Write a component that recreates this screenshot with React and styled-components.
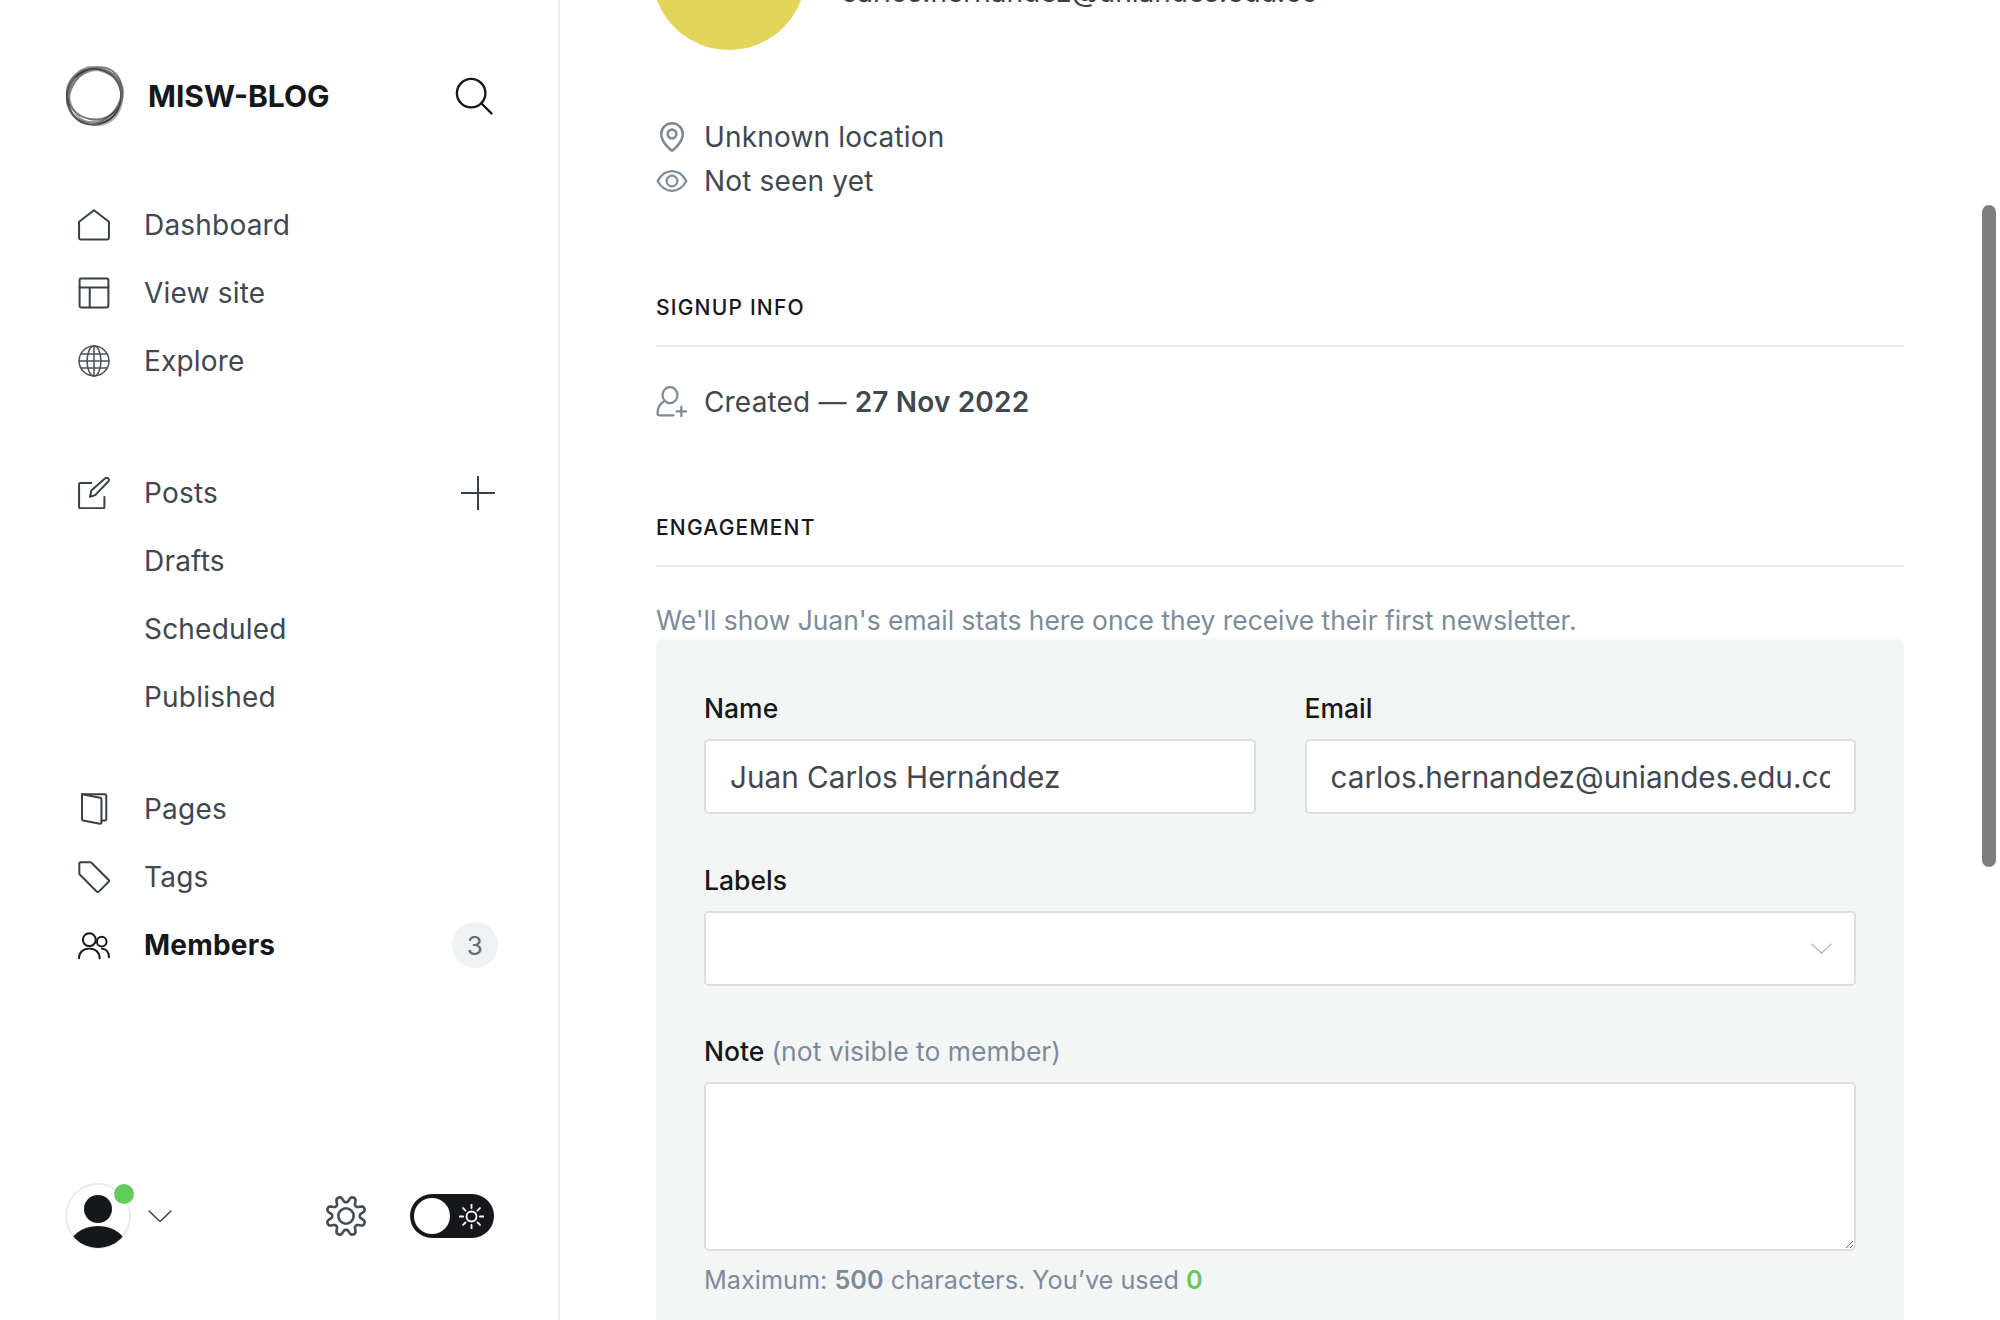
import React from 'react'
import styled, { createGlobalStyle } from 'styled-components'

const GlobalStyle = createGlobalStyle`
  html, body { margin: 0; padding: 0; height: 100%; overflow: hidden; background: #fff; }
  body { font-family: Inter, "Liberation Sans", sans-serif; color: #394047; }
  * { box-sizing: border-box; }
`

const Layout = styled.div`
  display: flex;
  width: 2000px;
  height: 1320px;
  overflow: hidden;
`

const Sidebar = styled.aside`
  flex: 0 0 560px;
  display: flex;
  flex-direction: column;
  padding: 66px 64px 71px 65px;
  border-right: 2px solid #edeff1;
`

const Brand = styled.div`
  display: flex;
  align-items: center;
  height: 60px;
  padding-right: 1px;
`

const BrandName = styled.span`
  flex: 1;
  margin-left: 23px;
  font-size: 30px;
  font-weight: 700;
  color: #15171a;
`

const Nav = styled.nav`
  display: flex;
  flex-direction: column;
  margin-top: 65px;
  padding-left: 13px;
`

const NavGroup = styled.ul`
  list-style: none;
  margin: 0 0 ${p => p.$gap || 0}px;
  padding: 0;
`

const NavRow = styled.li`
  display: flex;
  align-items: center;
  height: 68px;
  font-size: 28px;
  letter-spacing: 0.2px;
  font-weight: ${p => (p.$active ? 700 : 400)};
  color: ${p => (p.$active ? '#15171a' : '#3f4750')};
  padding-left: ${p => (p.$sub ? 66 : 0)}px;
`

const NavLabel = styled.span`
  flex: 1;
  margin-left: 34px;
`

const SubLabel = styled.span`
  flex: 1;
`

const Badge = styled.span`
  display: flex;
  align-items: center;
  justify-content: center;
  width: 46px;
  height: 46px;
  border-radius: 50%;
  margin-right: -4px;
  background: #eff1f3;
  color: #626d79;
  font-size: 26px;
  font-weight: 400;
`

const PlusSlot = styled.span`
  display: flex;
  margin-right: -1px;
`

const Icon = styled.svg`
  flex: none;
  width: ${p => p.$w || p.$size || 32}px;
  height: ${p => p.$size || 32}px;
  fill: none;
  stroke: currentColor;
  stroke-width: ${p => p.$stroke || 1.5};
  stroke-linecap: round;
  stroke-linejoin: round;
  color: ${p => p.$color || '#394047'};
`

const Footer = styled.div`
  margin-top: auto;
  display: flex;
  align-items: center;
`

const Avatar = styled.div`
  position: relative;
  width: 66px;
  height: 66px;
`

const AvatarDot = styled.span`
  position: absolute;
  top: 1px;
  right: -3px;
  width: 20px;
  height: 20px;
  border-radius: 50%;
  background: #62cb5c;
`

const FooterChevron = styled.span`
  display: flex;
  flex: 1;
  margin-left: 17px;
`

const ThemeToggle = styled.div`
  display: flex;
  align-items: center;
  justify-content: space-between;
  width: 84px;
  height: 44px;
  margin-left: 43px;
  padding: 0 10px 0 4px;
  border-radius: 22px;
  background: #15171a;
`

const Knob = styled.span`
  width: 36px;
  height: 36px;
  border-radius: 50%;
  background: #fff;
`

const Main = styled.main`
  position: relative;
  flex: 1;
  height: 1320px;
  padding: 0 96px;
  overflow: hidden;
`

const ScrollThumb = styled.div`
  position: absolute;
  top: 205px;
  right: 4px;
  width: 14px;
  height: 662px;
  border-radius: 7px;
  background: #7f7f7f;
`

const Profile = styled.header`
  display: flex;
  margin-top: -104px;
  margin-left: -4px;
`

const ProfileAvatar = styled.div`
  flex: none;
  width: 154px;
  height: 154px;
  border-radius: 50%;
  background: #e2d55b;
`

const ProfileEmail = styled.div`
  margin: 78px 0 0 35px;
  font-size: 28px;
  line-height: 36px;
  color: #394047;
`

const Meta = styled.ul`
  list-style: none;
  margin: ${p => p.$top}px 0 0;
  padding: 0;
`

const MetaRow = styled.li`
  display: flex;
  align-items: center;
  gap: 16px;
  height: 44px;
  font-size: 28px;
  letter-spacing: 0.17px;
  color: #3f4750;

  strong { font-weight: 600; }
`

const MetaIcon = styled.span`
  display: flex;
  justify-content: center;
  width: 32px;
`

const SectionTitle = styled.h4`
  margin: ${p => p.$top}px 0 0;
  padding-bottom: 22px;
  border-bottom: 2px solid #ebeef0;
  font-size: 21px;
  line-height: 30px;
  font-weight: 500;
  letter-spacing: 1.2px;
  text-transform: uppercase;
  color: #15171a;
`

const Hint = styled.p`
  margin: 34px 0 0;
  font-size: 26.4px;
  line-height: 38px;
  color: #7c8b9a;
`

const Panel = styled.section`
  padding: 51px 48px 60px;
  background: #f4f6f6;
  border-radius: 6px;
`

const FieldRow = styled.div`
  display: grid;
  grid-template-columns: 1fr 1fr;
  gap: 49px;
`

const Field = styled.div`
  margin-top: ${p => p.$top || 0}px;
`

const Label = styled.label`
  display: block;
  margin-bottom: 13px;
  font-size: 26.5px;
  line-height: 36px;
  font-weight: 500;
  color: #15171a;

  span { font-weight: 400; color: #7c8b9a; }
`

const TextInput = styled.input`
  display: block;
  width: 100%;
  height: 75px;
  padding: 0 24px;
  border: 2px solid #dddee0;
  border-radius: 5px;
  background: #fff;
  font: 400 29.7px Inter, "Liberation Sans", sans-serif;
  color: #3f4750;
  outline: none;
`

const SelectBox = styled.div`
  display: flex;
  align-items: center;
  justify-content: flex-end;
  height: 75px;
  padding-right: 22px;
  border: 2px solid #dddee0;
  border-radius: 5px;
  background: #fff;
`

const NoteArea = styled.textarea`
  display: block;
  width: 100%;
  height: 169px;
  border: 2px solid #dddee0;
  border-radius: 5px;
  background: #fff;
  resize: vertical;
  outline: none;
`

const Counter = styled.p`
  margin: 11px 0 0;
  font-size: 25.25px;
  line-height: 36px;
  color: #7c8b9a;

  strong { font-weight: 600; }
  em { font-style: normal; font-weight: 600; color: #62cb5c; }
`

// wavy outline for the settings gear, 8 rounded teeth
const gearPath = () => {
  const pts = []
  for (let i = 0; i < 160; i++) {
    const a = (i / 160) * Math.PI * 2 + Math.PI / 8
    const r = 9.6 + 1.9 * Math.tanh(1.5 * Math.cos(8 * (a - Math.PI / 8)))
    pts.push(`${(12 + r * Math.cos(a)).toFixed(2)} ${(12 + r * Math.sin(a)).toFixed(2)}`)
  }
  return `M${pts.join('L')}Z`
}

const Logo = () => (
  <svg width="60" height="60" viewBox="0 0 60 60" fill="none" aria-hidden="true">
    <path d="M33 5c7-4 18 1 19 9-6-4-12-7-19-9z" fill="#b0b0b0" />
    <ellipse cx="29.5" cy="31" rx="27" ry="28" transform="rotate(20 30 30)" stroke="#2c2f33" strokeWidth="2" />
    <ellipse cx="30" cy="29.5" rx="24.5" ry="30" transform="rotate(35 30 30)" stroke="#555" strokeOpacity=".75" strokeWidth="2" />
    <ellipse cx="30" cy="30" rx="25" ry="29" transform="rotate(60 30 30)" stroke="#666" strokeOpacity=".65" strokeWidth="2" />
    <ellipse cx="28" cy="31" rx="25.5" ry="27.5" transform="rotate(100 30 30)" stroke="#444" strokeOpacity=".75" strokeWidth="2" />
    <ellipse cx="30.5" cy="30" rx="26" ry="29.5" transform="rotate(-20 30 30)" stroke="#777" strokeOpacity=".65" strokeWidth="2" />
  </svg>
)

const Search = () => (
  <Icon $size={38} $color="#15171a" viewBox="0 0 24 24">
    <circle cx="10.2" cy="10.2" r="9" />
    <path d="M16.6 16.6 23 23" />
  </Icon>
)

const Home = () => (
  <Icon viewBox="0 0 24 24">
    <path d="M.8 9.6 12 .9l11.2 8.7v12.2a1 1 0 0 1-1 1H1.8a1 1 0 0 1-1-1z" />
  </Icon>
)

const Layers = () => (
  <Icon viewBox="0 0 24 24">
    <rect x="1.2" y="1.2" width="21.6" height="21.6" rx="1" />
    <path d="M1.2 7.8h21.6M8.8 7.8v15" />
  </Icon>
)

const Globe = () => (
  <Icon $stroke={1.15} $color="#4a525b" viewBox="0 0 24 24">
    <circle cx="12" cy="12" r="11.2" />
    <ellipse cx="12" cy="12" rx="5.2" ry="11.2" />
    <path d="M12 .8v22.4M2.2 6.8h19.6M.8 12h22.4M2.2 17.2h19.6" />
  </Icon>
)

const Edit = () => (
  <Icon viewBox="0 0 24 24">
    <path d="M10 4.5H1.8a1 1 0 0 0-1 1v17a1 1 0 0 0 1 1h17a1 1 0 0 0 1-1V15" />
    <path d="M9 14.8l1-4.6L20.4 1a1.6 1.6 0 0 1 2.3.1 1.6 1.6 0 0 1 0 2.3L12.9 13.6z" />
  </Icon>
)

const Plus = () => (
  <Icon $size={34} $color="#394047" $stroke={1.4} viewBox="0 0 24 24">
    <path d="M12 0v24M0 12h24" />
  </Icon>
)

const Pages = () => (
  <Icon viewBox="0 0 24 24">
    <path d="M3 1h17.2a1 1 0 0 1 1 1v17.6a1 1 0 0 1-1 1h-2.6" />
    <path d="M3 1l13.6 2.6a1 1 0 0 1 1 1v17.6a1 1 0 0 1-1.2.9L3.8 20.6a1 1 0 0 1-.8-1z" />
  </Icon>
)

const Tag = () => (
  <Icon viewBox="0 0 24 24">
    <path d="M1.8 1h7.6a1 1 0 0 1 .7.3L23 14.2a1 1 0 0 1 0 1.4l-7.4 7.4a1 1 0 0 1-1.4 0L1.3 10.1a1 1 0 0 1-.3-.7V1.8a.8.8 0 0 1 .8-.8z" />
  </Icon>
)

const People = () => (
  <Icon $color="#15171a" viewBox="0 0 24 24">
    <circle cx="8.5" cy="8" r="4.8" />
    <path d="M.8 22c0-4.6 3.4-7.4 7.7-7.4s7.7 2.8 7.7 7.4" />
    <circle cx="17.8" cy="9.5" r="3.6" />
    <path d="M18 14.8c3.2 0 5.2 2.6 5.2 6.4" />
  </Icon>
)

const UserAvatar = () => (
  <svg width="66" height="66" viewBox="0 0 66 66" aria-hidden="true">
    <defs>
      <clipPath id="avatar-clip">
        <circle cx="33" cy="33" r="32" />
      </clipPath>
    </defs>
    <circle cx="33" cy="33" r="32" fill="#fff" stroke="#e8eaec" strokeWidth="2" />
    <g clipPath="url(#avatar-clip)" fill="#15171a">
      <circle cx="33" cy="26" r="14" />
      <ellipse cx="33" cy="67" rx="30" ry="24" />
    </g>
  </svg>
)

const Chevron = ({ color, size = 24 }) => (
  <Icon $size={size} $color={color} viewBox="0 0 24 24">
    <path d="M1 7l11 10.5L23 7" />
  </Icon>
)

const Gear = () => (
  <Icon $size={42} $stroke={1.5} $color="#434b54" viewBox="0 0 24 24">
    <circle cx="12" cy="12" r="4.4" />
    <path d={gearPath()} />
  </Icon>
)

const Sun = () => (
  <Icon $size={25} $color="#fff" $stroke={1.8} viewBox="0 0 24 24">
    <circle cx="12" cy="12" r="4.8" />
    <path d="M12 .5v3.4M12 20.1v3.4M.5 12h3.4M20.1 12h3.4M3.9 3.9l2.4 2.4M17.7 17.7l2.4 2.4M3.9 20.1l2.4-2.4M17.7 6.3l2.4-2.4" />
  </Icon>
)

const Pin = () => (
  <Icon $size={30} $w={26} $stroke={2.1} $color="#7c8b9a" viewBox="0 0 20 24">
    <path d="M10 23C8.8 22.2 1.4 16.4 1.4 9.6a8.6 8.6 0 0 1 17.2 0C18.6 16.4 11.2 22.2 10 23z" />
    <circle cx="10" cy="9.6" r="3.5" />
  </Icon>
)

const Eye = () => (
  <Icon $size={24} $w={32} $stroke={2.2} $color="#7c8b9a" viewBox="0 0 32 24">
    <path d="M1.6 12C5 6 10 2.2 16 2.2S27 6 30.4 12C27 18 22 21.8 16 21.8S5 18 1.6 12z" />
    <circle cx="16" cy="12" r="5.4" />
  </Icon>
)

const UserAdd = () => (
  <Icon $size={32} $stroke={1.7} $color="#7c8b9a" viewBox="0 0 24 24">
    <ellipse cx="10.5" cy="6.8" rx="5.6" ry="6" />
    <path d="M5.8 11.6c-2.6 1.6-4.6 4.8-4.6 8.6 0 1.2.6 1.8 1.6 1.8h10.4" />
    <path d="M19 15.6v7M15.5 19.1h7" />
  </Icon>
)

const App = () => {
  return (
    <Layout>
      <GlobalStyle />
      <Sidebar>
        <Brand>
          <Logo />
          <BrandName>MISW-BLOG</BrandName>
          <Search />
        </Brand>
        <Nav>
          <NavGroup $gap={64}>
            <NavRow><Home /><NavLabel>Dashboard</NavLabel></NavRow>
            <NavRow><Layers /><NavLabel>View site</NavLabel></NavRow>
            <NavRow><Globe /><NavLabel>Explore</NavLabel></NavRow>
          </NavGroup>
          <NavGroup $gap={44}>
            <NavRow><Edit /><NavLabel>Posts</NavLabel><PlusSlot><Plus /></PlusSlot></NavRow>
            <NavRow $sub><SubLabel>Drafts</SubLabel></NavRow>
            <NavRow $sub><SubLabel>Scheduled</SubLabel></NavRow>
            <NavRow $sub><SubLabel>Published</SubLabel></NavRow>
          </NavGroup>
          <NavGroup>
            <NavRow><Pages /><NavLabel>Pages</NavLabel></NavRow>
            <NavRow><Tag /><NavLabel>Tags</NavLabel></NavRow>
            <NavRow $active><People /><NavLabel>Members</NavLabel><Badge>3</Badge></NavRow>
          </NavGroup>
        </Nav>
        <Footer>
          <Avatar>
            <UserAvatar />
            <AvatarDot />
          </Avatar>
          <FooterChevron><Chevron color="#394047" /></FooterChevron>
          <Gear />
          <ThemeToggle>
            <Knob />
            <Sun />
          </ThemeToggle>
        </Footer>
      </Sidebar>
      <Main>
        <Profile>
          <ProfileAvatar />
          <ProfileEmail>carlos.hernandez@uniandes.edu.co</ProfileEmail>
        </Profile>
        <Meta $top={65}>
          <MetaRow><MetaIcon><Pin /></MetaIcon>Unknown location</MetaRow>
          <MetaRow><MetaIcon><Eye /></MetaIcon>Not seen yet</MetaRow>
        </Meta>
        <SectionTitle $top={90}>Signup info</SectionTitle>
        <Meta $top={33}>
          <MetaRow>
            <MetaIcon><UserAdd /></MetaIcon>
            <span>Created — <strong>27 Nov 2022</strong></span>
          </MetaRow>
        </Meta>
        <SectionTitle $top={89}>Engagement</SectionTitle>
        <Hint>We'll show Juan's email stats here once they receive their first newsletter.</Hint>
        <Panel>
          <FieldRow>
            <Field>
              <Label>Name</Label>
              <TextInput readOnly value="Juan Carlos Hernández" />
            </Field>
            <Field>
              <Label>Email</Label>
              <TextInput readOnly value="carlos.hernandez@uniandes.edu.co" />
            </Field>
          </FieldRow>
          <Field $top={48}>
            <Label>Labels</Label>
            <SelectBox><Chevron color="#abb4be" size={21} /></SelectBox>
          </Field>
          <Field $top={47}>
            <Label>Note <span>(not visible to member)</span></Label>
            <NoteArea readOnly />
            <Counter>Maximum: <strong>500</strong> characters. You’ve used <em>0</em></Counter>
          </Field>
        </Panel>
        <ScrollThumb />
      </Main>
    </Layout>
  )
}

export default App
